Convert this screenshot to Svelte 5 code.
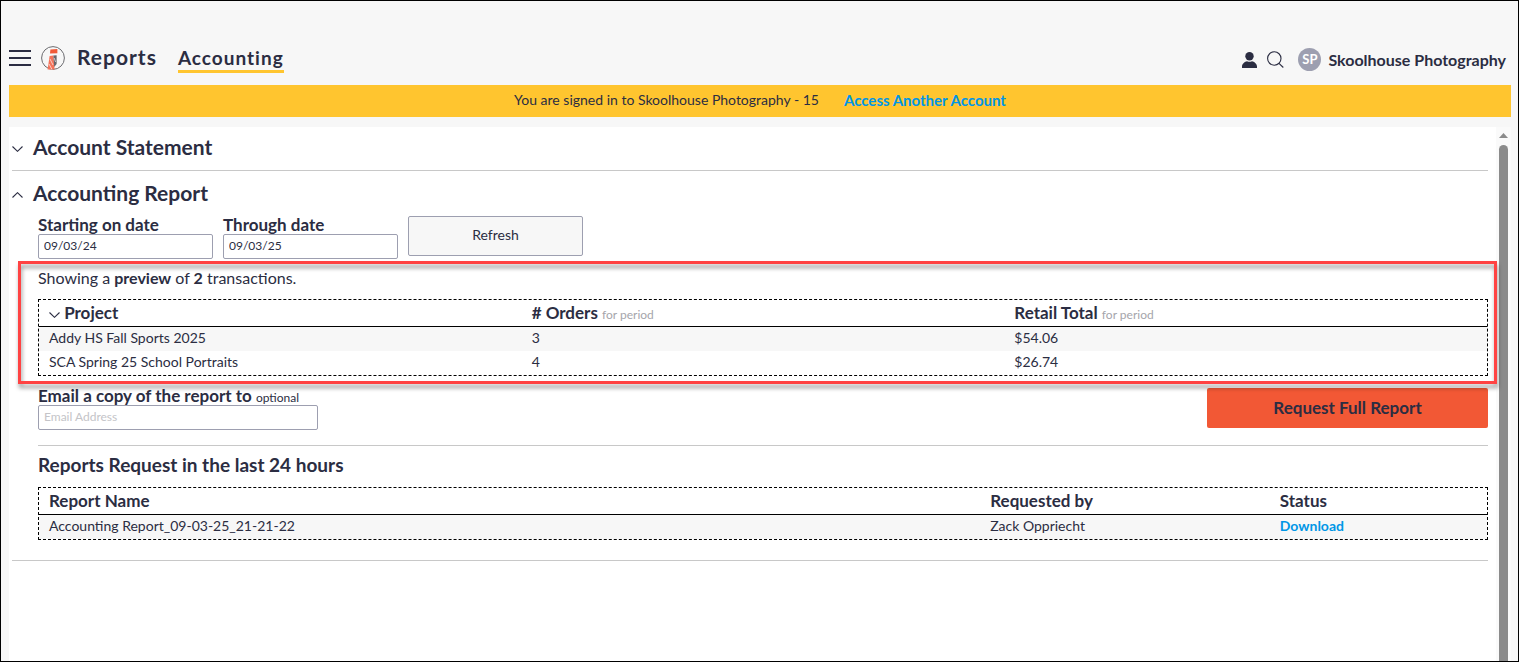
<script lang="ts">
  let startDate = $state('09/03/24');
  let endDate = $state('09/03/25');
  let email = $state('');

  const transactions = [
    { project: 'Addy HS Fall Sports 2025', orders: 3, total: '$54.06' },
    { project: 'SCA Spring 25 School Portraits', orders: 4, total: '$26.74' },
  ];

  const requests = [
    { name: 'Accounting Report_09-03-25_21-21-22', by: 'Zack Oppriecht' },
  ];
</script>

<div class="page">
  <header class="topbar">
    <button class="icon-btn" aria-label="Menu">
      <svg width="22" height="18" viewBox="0 0 22 18"><path d="M0 2H22M0 9H22M0 16H22" stroke="currentColor" stroke-width="1.8" /></svg>
    </button>
    <svg class="logo" width="24" height="26" viewBox="0 0 24 26" fill="none">
      <circle cx="12" cy="13" r="11.4" stroke="#6c6c70" />
      <path d="M9.4 4.4L16.4 4V8.2L9 8.6Z" fill="#f15a38" />
      <path d="M8.6 11L12.4 10.6L13.6 24.6H6.6Z" fill="#f4735a" />
      <path d="M12.4 10.6L15.6 10.2V19L13.2 22Z" fill="#66666c" />
      <path d="M9 14L12 20M8 19L11 24.5M13.2 13L14.6 17" stroke="#f7f7f7" stroke-width="0.7" />
    </svg>
    <nav class="tabs">
      <a href="#reports" class="tab root">Reports</a>
      <a href="#accounting" class="tab active">Accounting</a>
    </nav>
    <div class="account">
      <button class="icon-btn" aria-label="Profile">
        <svg width="15" height="16" viewBox="0 0 15 16" fill="currentColor"><circle cx="7.5" cy="4.2" r="4.2" /><path d="M0 16V14.5C0 11.5 3 9.5 5 9.2Q7.5 10.3 10 9.2C12 9.5 15 11.5 15 14.5V16Z" /></svg>
      </button>
      <button class="icon-btn search" aria-label="Search">
        <svg width="17" height="17" viewBox="0 0 17 17" fill="none" stroke="currentColor" stroke-width="1.1"><circle cx="7.3" cy="7.5" r="6.7" /><path d="M12 12.4L16.3 16.5" /></svg>
      </button>
      <span class="avatar">SP</span>
      <span class="account-name">Skoolhouse Photography</span>
    </div>
  </header>

  <div class="banner">
    <span>You are signed in to Skoolhouse Photography - 15</span>
    <a href="#accounts">Access Another Account</a>
  </div>

  <div class="panel">
    <main class="content">
      <section class="section">
        <h2>
          <button class="toggle" aria-expanded="false">
            <svg width="11" height="6" viewBox="0 0 11 6" fill="none"><path d="M0.5 0.5L5.5 5.3L10.5 0.5" stroke="currentColor" stroke-width="1.1" /></svg>
            Account Statement
          </button>
        </h2>
      </section>

      <section class="section">
        <h2>
          <button class="toggle" aria-expanded="true">
            <svg width="11" height="6" viewBox="0 0 11 6" fill="none"><path d="M0.5 5.5L5.5 0.7L10.5 5.5" stroke="currentColor" stroke-width="1.1" /></svg>
            Accounting Report
          </button>
        </h2>

        <div class="body">
          <form class="filters" onsubmit={(e) => e.preventDefault()}>
            <div class="field">
              <label for="start">Starting on date</label>
              <input id="start" type="text" bind:value={startDate} />
            </div>
            <div class="field">
              <label for="end">Through date</label>
              <input id="end" type="text" bind:value={endDate} />
            </div>
            <button class="refresh">Refresh</button>
          </form>

          <div class="preview">
            <p>Showing a <b>preview</b> of <b>2</b> transactions.</p>
            <table>
              <thead>
                <tr>
                  <th>
                    <svg class="sort" width="11" height="6" viewBox="0 0 11 6" fill="none"><path d="M0.5 0.5L5.5 5.3L10.5 0.5" stroke="currentColor" stroke-width="1.1" /></svg>
                    Project
                  </th>
                  <th># Orders <small>for period</small></th>
                  <th>Retail Total <small>for period</small></th>
                </tr>
              </thead>
              <tbody>
                {#each transactions as row}
                  <tr>
                    <td>{row.project}</td>
                    <td>{row.orders}</td>
                    <td>{row.total}</td>
                  </tr>
                {/each}
              </tbody>
            </table>
          </div>

          <form class="request" onsubmit={(e) => e.preventDefault()}>
            <div class="field email">
              <label for="email">Email a copy of the report to <small>optional</small></label>
              <input id="email" type="email" placeholder="Email Address" bind:value={email} />
            </div>
            <button class="primary">Request Full Report</button>
          </form>

          <div class="history">
            <h3>Reports Request in the last 24 hours</h3>
            <table>
              <colgroup>
                <col class="col-name" />
                <col class="col-by" />
                <col />
              </colgroup>
              <thead>
                <tr>
                  <th>Report Name</th>
                  <th>Requested by</th>
                  <th>Status</th>
                </tr>
              </thead>
              <tbody>
                {#each requests as row}
                  <tr>
                    <td>{row.name}</td>
                    <td>{row.by}</td>
                    <td><a href="#download">Download</a></td>
                  </tr>
                {/each}
              </tbody>
            </table>
          </div>
        </div>
      </section>
    </main>

    <div class="scrollbar" aria-hidden="true">
      <svg width="9" height="5" viewBox="0 0 9 5"><path d="M0 5L4.5 0L9 5Z" fill="#8b8b8b" /></svg>
      <div class="thumb"></div>
    </div>
  </div>
</div>

<style>
  .page {
    min-height: 100vh;
    box-sizing: border-box;
    display: flex;
    flex-direction: column;
    padding: 0 7px 0 8px;
    border: 1px solid #000;
    background: #f7f7f7;
    color: #2b2d42;
    font-family: Lato, "Open Sans", sans-serif;
    font-size: 14px;
    line-height: 20px;
  }

  button,
  input {
    font-family: inherit;
    color: inherit;
  }

  button {
    cursor: pointer;
  }

  a {
    color: #0096e6;
    font-weight: 700;
    text-decoration: none;
  }

  /* Top bar */
  .topbar {
    display: flex;
    align-items: center;
    height: 54px;
    padding-top: 30px;
  }

  .icon-btn {
    display: flex;
    padding: 0;
    border: none;
    background: none;
  }

  .logo {
    margin: 0 12px 0 10px;
  }

  .tabs {
    display: flex;
    align-items: flex-start;
    gap: 21px;
    padding-top: 3px;
  }

  .tab {
    color: #2b2d42;
    font-size: 19px;
    line-height: 24px;
    letter-spacing: 1px;
  }

  .tab.root {
    font-size: 21px;
    line-height: 22px;
  }

  .tab.active {
    border-bottom: 3px solid #ffc52f;
  }

  .account {
    display: flex;
    align-items: center;
    margin-left: auto;
    padding: 3px 5px 0 0;
  }

  .search {
    margin: 0 14px 0 10px;
  }

  .avatar {
    width: 23px;
    margin-right: 7px;
    border-radius: 50%;
    background: #9d9fb0;
    color: #fff;
    font-size: 13px;
    font-weight: 700;
    line-height: 23px;
    text-align: center;
  }

  .account-name {
    font-size: 16px;
    font-weight: 700;
  }

  .banner {
    display: flex;
    justify-content: center;
    gap: 25px;
    padding: 5px 0 7px;
    background: #ffc52f;
  }

  .banner a {
    font-size: 15px;
  }

  /* Panel */
  .panel {
    flex: 1;
    display: flex;
    margin-top: 10px;
    background: #fff;
  }

  .content {
    flex: 1;
    padding: 0 8px 0 3px;
  }

  .scrollbar {
    display: flex;
    flex-direction: column;
    align-items: center;
    gap: 7px;
    width: 15px;
    padding-top: 6px;
    background: #fafafa;
  }

  .thumb {
    flex: 1;
    width: 9px;
    border-radius: 5px 5px 0 0;
    background: #8b8b8b;
  }

  .section {
    border-bottom: 1px solid #c8c8c8;
  }

  .section + .section {
    padding-top: 2px;
  }

  h2 {
    margin: 0;
  }

  .toggle {
    display: flex;
    align-items: center;
    gap: 10px;
    padding: 8px 0 11px;
    border: none;
    background: none;
    font-size: 21px;
    font-weight: 700;
    line-height: 24px;
  }

  .toggle svg {
    margin-top: 3px;
  }

  .body {
    padding: 0 0 20px 26px;
  }

  /* Forms */
  .filters {
    display: flex;
    align-items: flex-start;
    gap: 10px;
  }

  .field {
    display: flex;
    flex-direction: column;
    width: 175px;
  }

  .field.email {
    width: 280px;
  }

  label {
    font-size: 17px;
    font-weight: 700;
    line-height: 18px;
    white-space: nowrap;
  }

  label small,
  th small {
    font-size: 12px;
    font-weight: 400;
    line-height: 12px;
  }

  input {
    box-sizing: border-box;
    width: 100%;
    height: 25px;
    padding: 0 5px 2px;
    border: 1px solid #9d9fb0;
    border-radius: 2px;
    background: #fff;
    font-size: 12px;
  }

  input::placeholder {
    color: #c4c4c8;
  }

  .refresh {
    width: 175px;
    height: 40px;
    padding: 0 0 3px;
    border: 1px solid #9d9fb0;
    border-radius: 2px;
    background: #f7f7f7;
    font-size: 14px;
  }

  /* Transactions preview with its highlight frame */
  .preview {
    position: relative;
    padding: 9px 0 11px;
  }

  .preview::after {
    content: "";
    position: absolute;
    inset: 2px -9px 3px -20px;
    border: 3px solid #ff4343;
    filter: drop-shadow(1px 4px 2px rgba(0, 0, 0, 0.4));
    pointer-events: none;
  }

  .preview p {
    margin: 0 0 11px;
    font-size: 16px;
  }

  table {
    width: 100%;
    table-layout: fixed;
    border: 1px dashed #000;
    border-spacing: 0;
  }

  .col-name {
    width: 65%;
  }

  .col-by {
    width: 20%;
  }

  th,
  td {
    box-sizing: border-box;
    padding: 0 10px;
    text-align: left;
  }

  th {
    height: 27px;
    border-bottom: 1px solid #000;
    font-size: 17px;
    font-weight: 700;
  }

  th small {
    color: #a5a5ab;
  }

  .sort {
    vertical-align: 1px;
  }

  td {
    height: 24px;
    padding-bottom: 2px;
    font-size: 14px;
  }

  tbody tr:nth-child(odd) {
    background: #f7f7f7;
  }

  .request {
    display: flex;
    align-items: flex-end;
    justify-content: space-between;
  }

  .primary {
    width: 281px;
    height: 40px;
    margin-bottom: 2px;
    padding: 0 0 2px;
    border: none;
    border-radius: 2px;
    background: #f25835;
    font-size: 17px;
    font-weight: 700;
  }

  .history {
    margin-top: 15px;
    border-top: 1px solid #c8c8c8;
  }

  h3 {
    margin: 7px 0 10px;
    font-size: 19px;
    line-height: 24px;
  }
</style>
